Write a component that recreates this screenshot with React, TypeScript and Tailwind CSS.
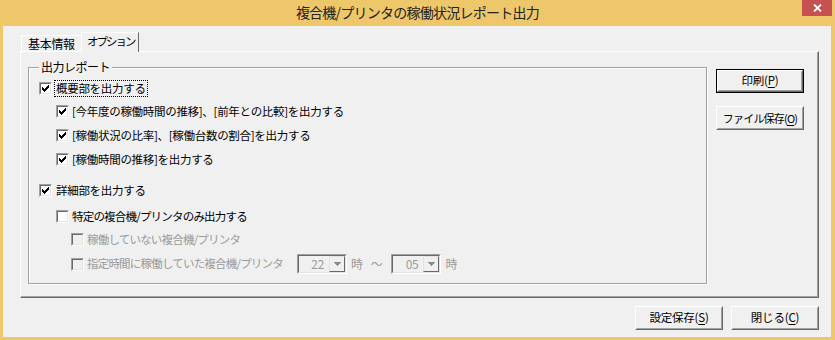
import React from "react";

const FONT = "[font-family:'Noto_Sans_CJK_JP','Noto_Sans',sans-serif]";

function Check({ checked, disabled }: { checked?: boolean; disabled?: boolean }) {
  return (
    <div className="w-[13px] h-[13px] shrink-0 border border-t-[#a0a0a0] border-l-[#a0a0a0] border-b-white border-r-white">
      <div
        className={`w-full h-full border border-t-[#696969] border-l-[#696969] border-b-[#e3e3e3] border-r-[#e3e3e3] flex items-center justify-center ${
          disabled ? "bg-[#f0f0f0]" : "bg-white"
        }`}
      >
        {checked && (
          <svg width="7" height="7" viewBox="0 0 7 7" shapeRendering="crispEdges">
            {[2, 3, 4, 3, 2, 1, 0].map((y, x) => (
              <rect key={x} x={x} y={y} width="1" height="3" fill="#000" />
            ))}
          </svg>
        )}
      </div>
    </div>
  );
}

function Btn({ children, def, tight }: { children: React.ReactNode; def?: boolean; tight?: boolean }) {
  const inner = (
    <div className="w-full h-full border border-t-white border-l-white border-b-[#696969] border-r-[#696969]">
      <div
        className={`w-full h-full border border-t-[#f0f0f0] border-l-[#f0f0f0] border-b-[#a0a0a0] border-r-[#a0a0a0] flex items-center justify-center ${
          tight ? "text-[11px] tracking-[-0.8px]" : "text-[11.5px] tracking-[-0.2px]"
        } text-black leading-none whitespace-nowrap`}
      >
        {children}
      </div>
    </div>
  );
  if (def) {
    return <div className="w-[88px] h-[24px] border border-black">{inner}</div>;
  }
  return <div className="w-[88px] h-[24px]">{inner}</div>;
}

function Combo({ value }: { value: string }) {
  return (
    <div className="w-[50px] h-[20px] shrink-0 border border-t-[#a0a0a0] border-l-[#a0a0a0] border-b-white border-r-white">
      <div className="w-full h-full border border-t-[#696969] border-l-[#696969] border-b-[#e3e3e3] border-r-[#e3e3e3] bg-[#f0f0f0] flex items-center">
        <span className="flex-1 text-right pr-[5px] text-[12px] leading-none text-[#9a9a9a]">{value}</span>
        <div className="w-[16px] h-[16px] border border-t-[#e3e3e3] border-l-[#e3e3e3] border-b-[#696969] border-r-[#696969] flex items-center justify-center">
          <svg width="7" height="4" viewBox="0 0 7 4" shapeRendering="crispEdges">
            <path d="M0 0h7v1h-1v1h-1v1h-1v1h-1v-1h-1v-1h-1v-1h-1z" fill="#8a8a8a" />
          </svg>
        </div>
      </div>
    </div>
  );
}

export default function App() {
  return (
    <div className={`w-[835px] h-[340px] bg-[#efc76b] flex flex-col ${FONT} overflow-hidden whitespace-nowrap`}>
      {/* Title bar */}
      <div className="relative h-[26px] shrink-0 flex items-center justify-center">
        <span className="text-[14px] tracking-[-0.75px] text-[#222] leading-none pb-[2px]">
          複合機/プリンタの稼働状況レポート出力
        </span>
        <div className="absolute right-[3px] top-0 w-[30px] h-[16px] bg-[#c75050] flex items-center justify-center">
          <svg width="9" height="8" viewBox="0 0 9 8">
            <path d="M1 0.5L8 7.5M8 0.5L1 7.5" stroke="#fff" strokeWidth="1.8" />
          </svg>
        </div>
      </div>

      {/* Client area */}
      <div className="ml-[3px] mr-[4px] h-[311px] bg-[#f0f0f0] pl-[17px] pr-[12px] pt-[6px] flex flex-col text-black">
        {/* Tabs */}
        <div className="h-[19px] flex items-end">
          <div className="ml-[1px] w-[60px] h-[16px] border-t border-l border-t-white border-l-white flex items-center pl-[6px] text-[12px] tracking-[-0.3px] leading-none">
            基本情報
          </div>
          <div className="relative z-10 w-[58px] h-[20px] -mb-[1px] bg-[#f0f0f0] border-t border-l border-r border-t-white border-l-white border-r-[#696969] flex items-start pt-[3px] pl-[5px] text-[11.5px] tracking-[-2px] leading-none">
            オプション
          </div>
        </div>

        {/* Tab panel */}
        <div className="w-[799px] h-[247px] border border-t-white border-l-white border-b-[#696969] border-r-[#696969]">
          <div className="w-full h-full border-b border-r border-b-[#a0a0a0] border-r-[#a0a0a0] flex items-start pl-[7px]">
            {/* Group box */}
            <div className="relative mt-[15px] w-[679px] h-[217px] border border-[#a0a0a0] shadow-[inset_1px_1px_0_#fff,1px_1px_0_#fff]">
              <span className="absolute left-[10px] -top-[8px] px-[2px] bg-[#f0f0f0] text-[12px] tracking-[-0.5px] leading-[14px]">
                出力レポート
              </span>
              <div className="flex flex-col pt-[12px] text-[11.5px] tracking-[-0.3px] leading-none">
                {/* r1 */}
                <div className="h-[17px] flex items-center pl-[10px]">
                  <Check checked />
                  <span className="ml-[2px] h-[17px] px-[1px] border border-dotted border-black flex items-center">
                    概要部を出力する
                  </span>
                </div>
                {/* r2 */}
                <div className="mt-[6px] h-[17px] flex items-center pl-[27px]">
                  <Check checked />
                  <span className="ml-[3px]">[今年度の稼働時間の推移]、[前年との比較]を出力する</span>
                </div>
                {/* r3 */}
                <div className="mt-[7px] h-[17px] flex items-center pl-[27px]">
                  <Check checked />
                  <span className="ml-[3px]">[稼働状況の比率]、[稼働台数の割合]を出力する</span>
                </div>
                {/* r4 */}
                <div className="mt-[7px] h-[17px] flex items-center pl-[27px]">
                  <Check checked />
                  <span className="ml-[3px]">[稼働時間の推移]を出力する</span>
                </div>
                {/* r5 */}
                <div className="mt-[14px] h-[17px] flex items-center pl-[10px]">
                  <Check checked />
                  <span className="ml-[4px]">詳細部を出力する</span>
                </div>
                {/* r6 */}
                <div className="mt-[9px] h-[17px] flex items-center pl-[27px]">
                  <Check />
                  <span className="ml-[3px] tracking-[-0.8px]">特定の複合機/プリンタのみ出力する</span>
                </div>
                {/* r7 */}
                <div className="mt-[6px] h-[17px] flex items-center pl-[42px] text-[#9a9a9a]">
                  <Check disabled />
                  <span className="ml-[3px] tracking-[-0.8px]">稼働していない複合機/プリンタ</span>
                </div>
                {/* r8 */}
                <div className="mt-[6px] h-[20px] flex items-center pl-[42px] text-[#9a9a9a]">
                  <Check disabled />
                  <span className="ml-[3px] w-[210px] tracking-[-0.8px]">指定時間に稼働していた複合機/プリンタ</span>
                  <Combo value="22" />
                  <span className="ml-[4px] text-[12px]">時</span>
                  <span className="ml-[8px] text-[12px]">〜</span>
                  <span className="ml-[9px]">
                    <Combo value="05" />
                  </span>
                  <span className="ml-[4px] text-[12px]">時</span>
                </div>
              </div>
            </div>

            {/* Right buttons */}
            <div className="ml-[9px] mt-[17px] flex flex-col gap-[13px]">
              <Btn def>
                印刷(<span className="underline underline-offset-2">P</span>)
              </Btn>
              <Btn tight>
                ファイル保存(<span className="underline underline-offset-2">O</span>)
              </Btn>
            </div>
          </div>
        </div>

        {/* Bottom buttons */}
        <div className="mt-[8px] w-[799px] flex justify-end gap-[8px]">
          <Btn>
            設定保存(<span className="underline underline-offset-2">S</span>)
          </Btn>
          <Btn>
            閉じる(<span className="underline underline-offset-2">C</span>)
          </Btn>
        </div>
      </div>
    </div>
  );
}
